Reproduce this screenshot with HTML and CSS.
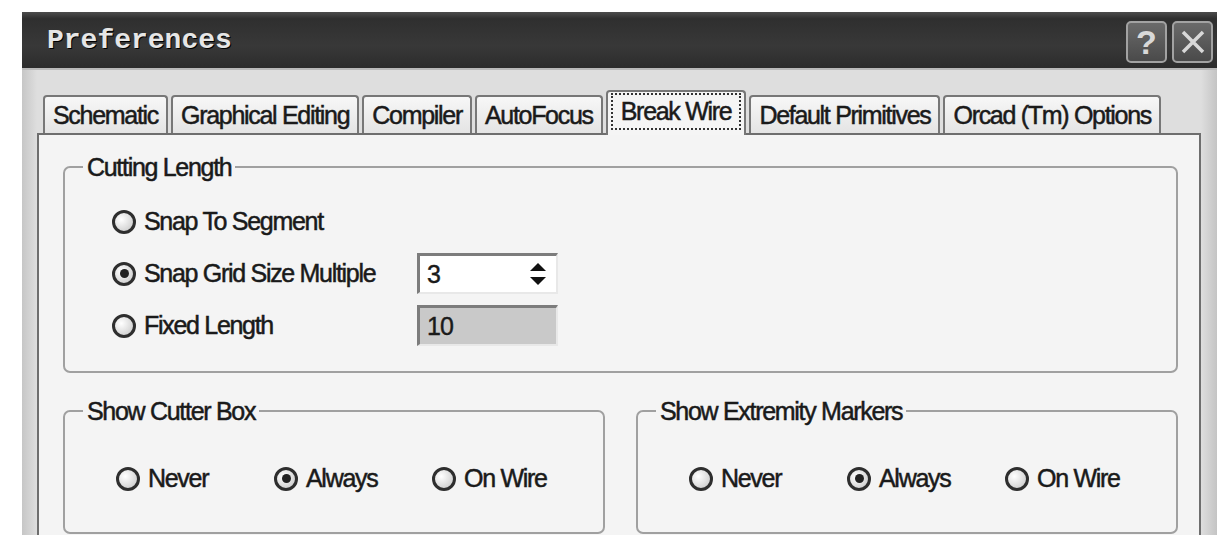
FILE: index.html
```html
<!DOCTYPE html>
<html lang="en">

<head>
    <meta charset="UTF-8">
    <title>Preferences</title>
    <link rel="stylesheet" href="styles.css">
</head>

<body>

    <div class="dialog">
        <!-- Title bar -->
        <div class="titlebar">
            <span class="title">Preferences</span>
            <div class="title-buttons">
                <div class="tb-btn">?</div>
                <div class="tb-btn">
                    <svg width="26" height="26" viewBox="0 0 26 26">
                        <path d="M3 3 L23 23 M23 3 L3 23" stroke="#d8d8d8" stroke-width="3.5" fill="none" />
                    </svg>
                </div>
            </div>
        </div>

        <div class="body">
            <!-- Tabs -->
            <div class="tabs">
                <div class="tab">Schematic</div>
                <div class="tab">Graphical Editing</div>
                <div class="tab">Compiler</div>
                <div class="tab">AutoFocus</div>
                <div class="tab active"><span class="focus">Break Wire</span></div>
                <div class="tab">Default Primitives</div>
                <div class="tab">Orcad (Tm) Options</div>
            </div>

            <div class="panel">
                <fieldset class="group">
                    <legend>Cutting Length</legend>
                    <div class="cut-rows">
                        <div class="radio"><span class="dot"></span>Snap To Segment</div>
                        <span></span>
                        <div class="radio"><span class="dot checked"></span>Snap Grid Size Multiple</div>
                        <div class="field">
                            3
                            <svg class="spin" width="18" height="28" viewBox="0 0 18 28">
                                <path d="M9 3 L17 11 L1 11 Z" fill="#111" />
                                <path d="M1 17 L17 17 L9 25 Z" fill="#111" />
                            </svg>
                        </div>
                        <div class="radio"><span class="dot"></span>Fixed Length</div>
                        <div class="field disabled">10</div>
                    </div>
                </fieldset>

                <div class="group-row">
                    <fieldset class="group">
                        <legend>Show Cutter Box</legend>
                        <div class="choices">
                            <div class="radio"><span class="dot"></span>Never</div>
                            <div class="radio"><span class="dot checked"></span>Always</div>
                            <div class="radio"><span class="dot"></span>On Wire</div>
                        </div>
                    </fieldset>
                    <fieldset class="group">
                        <legend>Show Extremity Markers</legend>
                        <div class="choices">
                            <div class="radio"><span class="dot"></span>Never</div>
                            <div class="radio"><span class="dot checked"></span>Always</div>
                            <div class="radio"><span class="dot"></span>On Wire</div>
                        </div>
                    </fieldset>
                </div>
            </div>
        </div>
    </div>

</body>
</html>
```

FILE: styles.css
```css
body {
    margin: 0;
    background-color: #fff;
    font-family: 'Liberation Sans', Arial, sans-serif;
    color: #1a1a1a;
}

/* Dialog frame */
.dialog {
    margin: 12px 0 0 22px;
    width: 1195px;
    height: 523px;
    background-color: #dcdcdc;
    overflow: hidden;
}

/* Title bar */
.titlebar {
    height: 58px;
    display: flex;
    align-items: center;
    justify-content: space-between;
    padding: 0 4px 0 25px;
    background: linear-gradient(#4c4c4c, #2f2f2f 12%, #383838 60%, #2c2c2c);
    border-bottom: 2px solid #b9b9b9;
    box-sizing: border-box;
}

.title {
    font-family: 'Liberation Mono', 'Courier New', monospace;
    font-weight: bold;
    font-size: 28px;
    color: #e6e6e6;
    text-shadow: 1px 1px 0 #000;
}

.title-buttons {
    display: flex;
    gap: 5px;
    margin-top: 4px;
}

.tb-btn {
    width: 41px;
    height: 42px;
    box-sizing: border-box;
    border: 2px solid #a2a2a2;
    border-radius: 5px;
    background: linear-gradient(#6a6a6a, #4a4a4a);
    color: #d8d8d8;
    font-size: 34px;
    font-weight: bold;
    display: flex;
    align-items: center;
    justify-content: center;
}

/* Body under the title bar */
.body {
    padding: 0 16px 0 15px;
    background: linear-gradient(90deg, #c6c6c6, #dedede 15px, #dedede calc(100% - 16px), #c4c4c4);
}

.tabs {
    display: flex;
    align-items: flex-end;
    gap: 3px;
    padding: 20px 0 0 6px;
}

.tab {
    height: 38px;
    box-sizing: border-box;
    padding: 0 8px;
    display: flex;
    align-items: center;
    border: 2px solid #777;
    border-bottom: none;
    border-radius: 4px 4px 0 0;
    background: linear-gradient(#f7f7f7, #e4e4e4);
    font-size: 25px;
    letter-spacing: -1.3px;
    -webkit-text-stroke: 0.5px #1a1a1a;
}

.tab.active {
    height: 45px;
    margin-bottom: -2px;
    padding: 0 3px;
    background: #f5f5f5;
}

.tab .focus {
    border: 2px dotted #333;
    padding: 2px 8px;
    margin-top: -4px;
}

/* Tab page */
.panel {
    height: 402px;
    box-sizing: border-box;
    padding: 18px 21px 0 24px;
    background-color: #f4f4f4;
    border: 2px solid #6e6e6e;
    border-bottom: none;
}

.group {
    margin: 0;
    padding: 0 0 0 18px;
    border: 2px solid #a0a0a0;
    border-radius: 7px;
    min-width: 0;
}

.group legend {
    padding: 0 4px;
    font-size: 25px;
    line-height: 28px;
    letter-spacing: -1.3px;
    -webkit-text-stroke: 0.5px #1a1a1a;
}

.cut-rows {
    display: grid;
    grid-template-columns: 305px 141px;
    grid-auto-rows: 41px;
    row-gap: 11px;
    align-items: center;
    padding: 20px 0 25px 29px;
}

.radio {
    display: flex;
    align-items: center;
    gap: 8px;
    font-size: 25px;
    letter-spacing: -1.3px;
    -webkit-text-stroke: 0.5px #1a1a1a;
}

.dot {
    width: 24px;
    height: 24px;
    box-sizing: border-box;
    border: 3px solid #2e2e2e;
    border-radius: 50%;
    background: radial-gradient(circle at 35% 35%, #fff, #c4c4c4);
    display: flex;
    align-items: center;
    justify-content: center;
    flex-shrink: 0;
}

.dot.checked::after {
    content: '';
    width: 9px;
    height: 9px;
    border-radius: 50%;
    background-color: #222;
}

/* Edit boxes */
.field {
    height: 41px;
    box-sizing: border-box;
    border-top: 3px solid #7c7c7c;
    border-left: 3px solid #7c7c7c;
    border-right: 2px solid #e8e8e8;
    border-bottom: 2px solid #e8e8e8;
    background-color: #fff;
    display: flex;
    align-items: center;
    justify-content: space-between;
    padding: 0 9px 0 7px;
    font-size: 25px;
    letter-spacing: -1px;
    -webkit-text-stroke: 0.4px #1a1a1a;
}

.field.disabled {
    background-color: #c9c9c9;
}

.group-row {
    display: grid;
    grid-template-columns: 1fr 1fr;
    gap: 31px;
    margin-top: 24px;
}

.choices {
    display: grid;
    grid-template-columns: repeat(3, 158px);
    align-items: center;
    height: 28px;
    padding: 39px 0 40px 33px;
}
```
